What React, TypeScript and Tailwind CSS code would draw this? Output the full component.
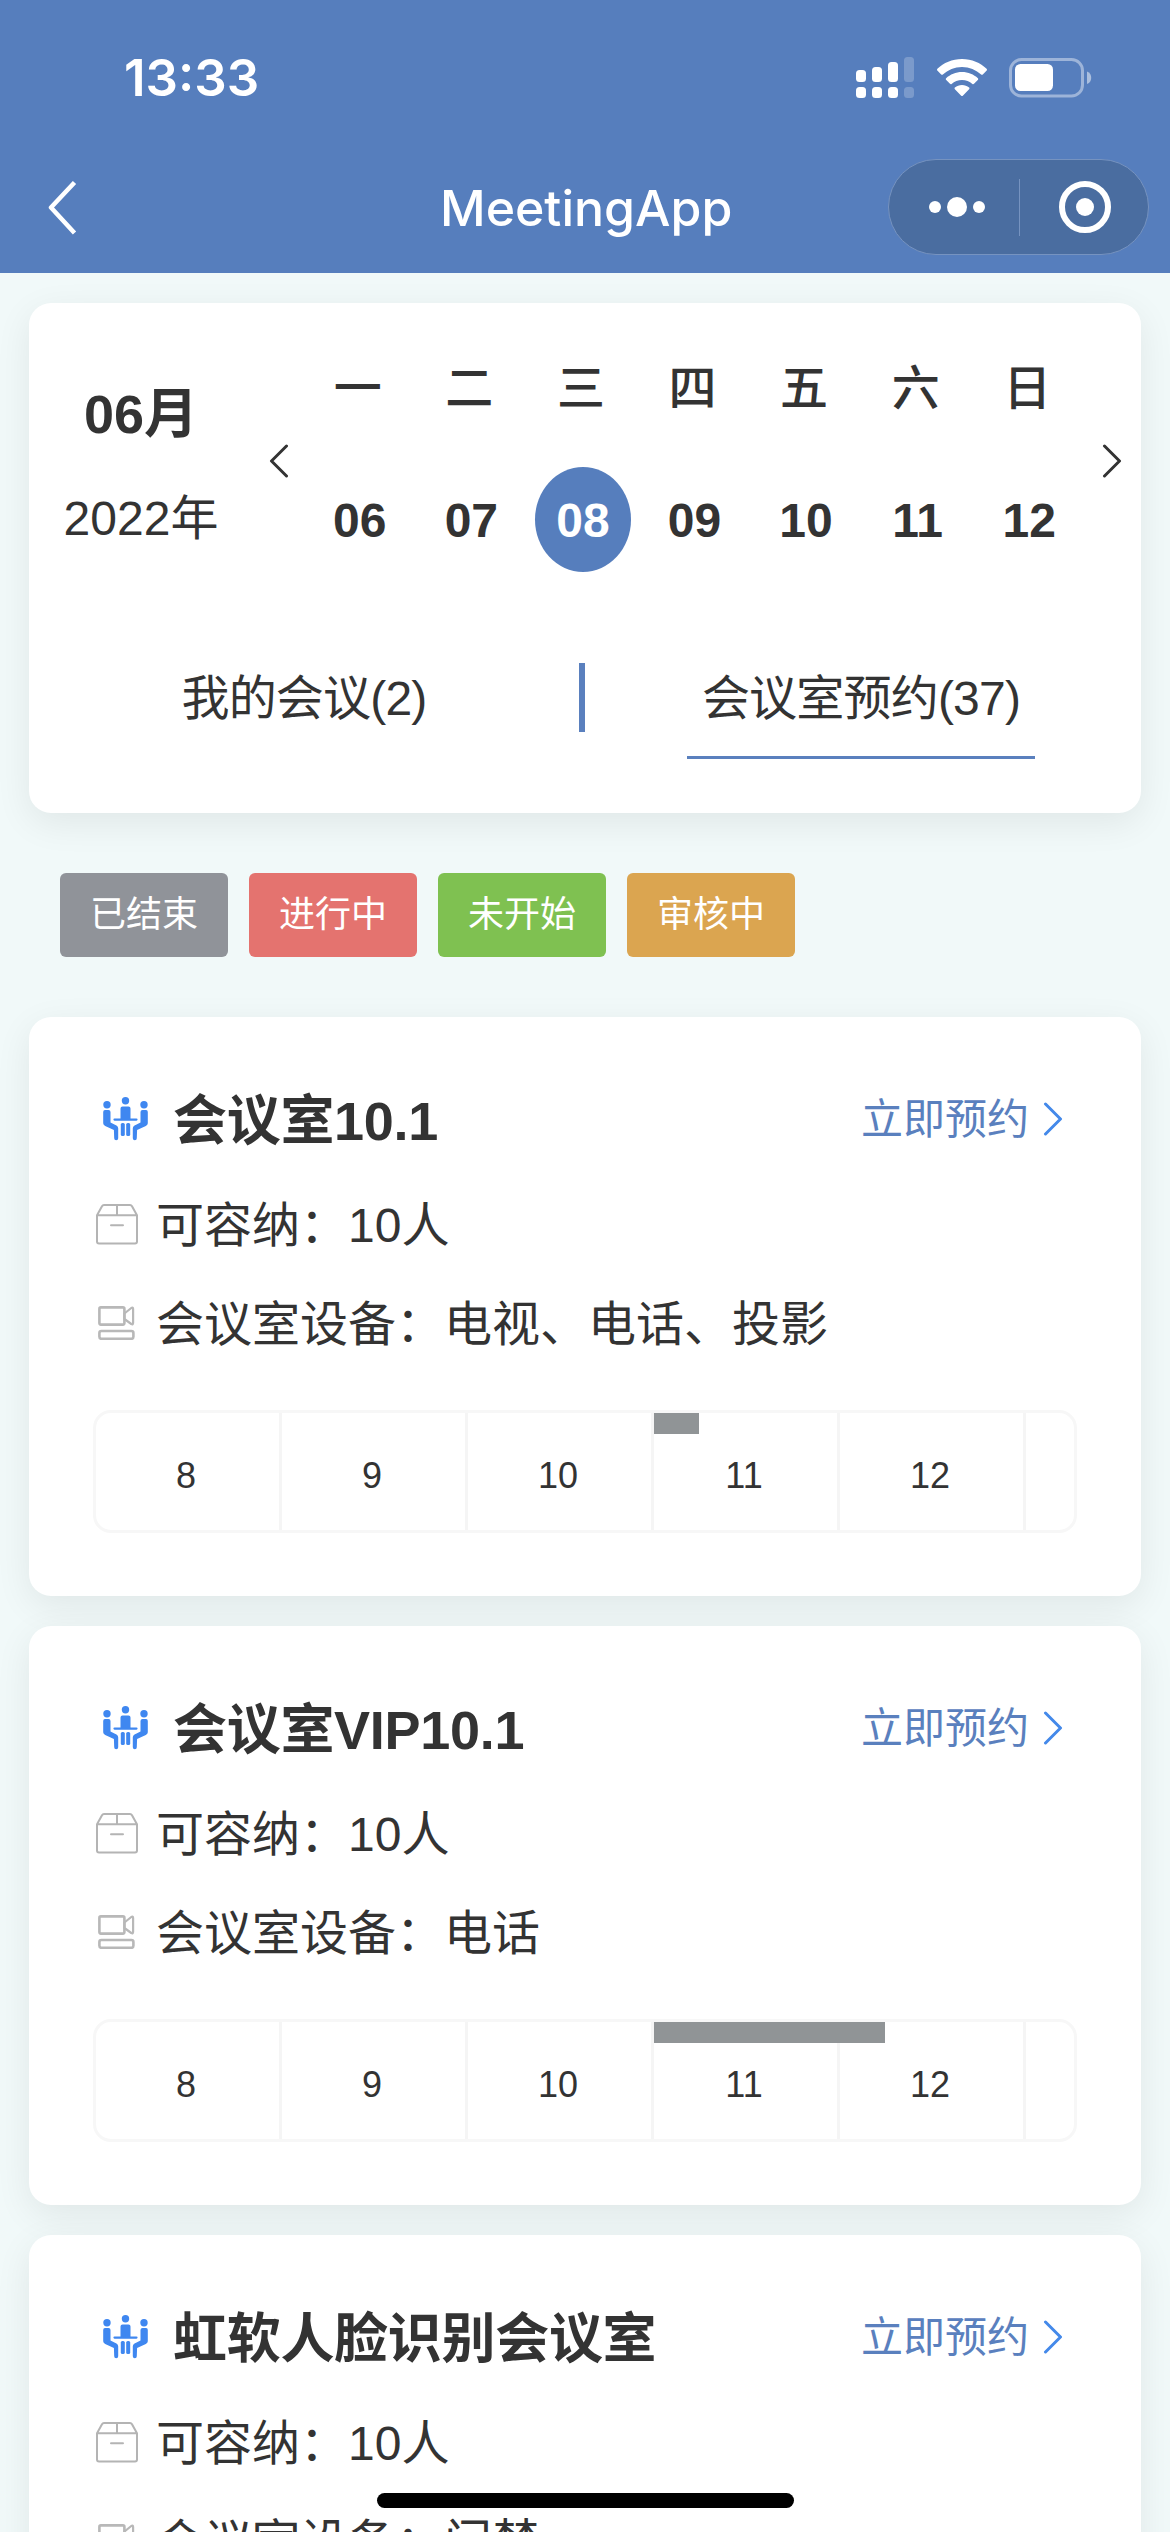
import React from "react";

const WEEK = [
  ["一", "06"],
  ["二", "07"],
  ["三", "08"],
  ["四", "09"],
  ["五", "10"],
  ["六", "11"],
  ["日", "12"],
];

const TAGS = [
  { label: "已结束", color: "bg-[#909399]" },
  { label: "进行中", color: "bg-[#e4736f]" },
  { label: "未开始", color: "bg-[#7fc151]" },
  { label: "审核中", color: "bg-[#dba550]" },
];

const ROOMS = [
  { name: "会议室10.1", devices: "电视、电话、投影", busy: 45 },
  { name: "会议室VIP10.1", devices: "电话", busy: 231 },
  { name: "虹软人脸识别会议室", devices: "门禁", busy: 0 },
];

const HOURS = ["8", "9", "10", "11", "12"];

function Signal() {
  return (
    <svg className="h-[42px] w-[58px]" viewBox="0 0 58 42" fill="#fff">
      <rect x="0" y="13" width="10" height="12" rx="3.5" />
      <rect x="16" y="10" width="10" height="15" rx="3.5" />
      <rect x="32" y="5" width="10" height="20" rx="3.5" />
      <rect x="0" y="30" width="10" height="11" rx="3.5" />
      <rect x="16" y="30" width="10" height="11" rx="3.5" />
      <rect x="32" y="30" width="10" height="11" rx="3.5" />
      <g opacity="0.22">
        <rect x="48" y="0" width="10" height="25" rx="3.5" />
        <rect x="48" y="30" width="10" height="11" rx="3.5" />
      </g>
    </svg>
  );
}

function Wifi() {
  return (
    <svg className="h-[38px] w-[50px]" viewBox="0 0 50 38" fill="#fff">
      <path d="M25 0C34.800 0 43.500 3.900 49.600 9.800c.5.500.5 1.100.1 1.600l-3.900 4c-.5.500-1.200.500-1.700.1C39.100 10.800 32.400 7.900 25 7.900S10.900 10.800 5.900 15.500c-.5.400-1.200.4-1.700-.1l-3.900-4c-.4-.5-.4-1.100.1-1.600C6.500 3.900 15.200 0 25 0Z" />
      <path d="M25 13c6.200 0 11.800 2.400 15.900 6.200.5.500.5 1.100.1 1.600l-4 4c-.5.500-1.100.500-1.600.1C32.600 22.500 29 21 25 21s-7.600 1.500-10.400 3.900c-.5.400-1.100.4-1.600-.1l-4-4c-.4-.5-.4-1.100.1-1.600C13.200 15.400 18.800 13 25 13Z" />
      <path d="M25 26c2.700 0 5.200 1 7.100 2.600.5.400.5 1.100 0 1.600l-6.300 6.500c-.5.500-1.100.5-1.600 0l-6.300-6.500c-.5-.5-.5-1.200 0-1.600C19.800 27 22.300 26 25 26Z" />
    </svg>
  );
}

function Battery() {
  return (
    <svg className="h-[40px] w-[83px]" viewBox="0 0 83 40" fill="none">
      <rect x="1.500" y="1.500" width="72" height="36.500" rx="11" stroke="#fff" strokeOpacity="0.42" strokeWidth="3" />
      <rect x="6" y="6" width="38" height="27" rx="5.500" fill="#fff" />
      <path d="M78 13.500c3 1 4.200 3.600 4.200 6.200S81 25 78 26Z" fill="#fff" fillOpacity="0.5" />
    </svg>
  );
}

function Chevron({ left = false, className }: { left?: boolean; className: string }) {
  return (
    <svg className={className} viewBox="0 0 20 34" fill="none" stroke="currentColor" strokeWidth="3" strokeLinecap="round" strokeLinejoin="round">
      <path d={left ? "M17.500 2 2.500 17l15 15" : "M2.500 2 17.500 17l-15 15"} />
    </svg>
  );
}

function MeetingIcon() {
  return (
    <svg className="h-[44px] w-[45px] shrink-0" viewBox="0 0 45 44" fill="#3f87f0">
      <circle cx="22.500" cy="3.700" r="3.700" />
      <circle cx="4" cy="7.700" r="3.700" />
      <circle cx="41" cy="7.700" r="3.700" />
      <path d="M19.500 9.500h6a2 2 0 0 1 2 2v10h6a1 1 0 0 1 0 2.200h-22a1 1 0 0 1 0-2.200h6v-10a2 2 0 0 1 2-2Z" />
      <rect x="17.800" y="26" width="4" height="13" rx="1.600" />
      <rect x="23.200" y="26" width="4" height="13" rx="1.600" />
      <path d="M2 13h3.500a2 2 0 0 1 2 2v10.500l6 3q1.700.9 1.700 2.800v10q0 2-2 2t-2-2l-.3-8.300-8.700-4Q.2 28 .2 26.200V15q0-2 1.800-2Z" />
      <path d="M43 13h-3.500a2 2 0 0 0-2 2v10.500l-6 3q-1.700.9-1.700 2.800v10q0 2 2 2t2-2l.3-8.300 8.700-4q2-1 2-2.800V15q0-2-1.800-2Z" />
    </svg>
  );
}

function BoxIcon() {
  return (
    <svg className="h-[41px] w-[42px] shrink-0" viewBox="0 0 42 41" fill="none" stroke="#b4b4b4" strokeWidth="2" strokeLinejoin="round" strokeLinecap="round">
      <path d="M1 11.300 6 2.300Q6.700 1 8 1h26q1.300 0 2 1.300l5 9v26.200q0 2-2 2H3q-2 0-2-2ZM1 11.300h40M21 1v10.300M15 21.300h12" />
    </svg>
  );
}

function DeviceIcon() {
  return (
    <svg className="h-[34px] w-[37px] shrink-0" viewBox="0 0 37 34" fill="none" stroke="#b8b8b8" strokeWidth="2.600" strokeLinejoin="round">
      <rect x="1.400" y="1.400" width="25" height="17.200" rx="1.500" />
      <path d="M26.400 7.500 33.300 2q1.800-.9 1.800 1v14q0 1.900-1.800 1L26.400 13Z" strokeWidth="2.200" />
      <rect x="1.400" y="25" width="34" height="7.800" rx="2" />
    </svg>
  );
}

function RoomCard({ room }: { room: (typeof ROOMS)[number] }) {
  return (
    <section className="flex h-[579px] shrink-0 flex-col rounded-[22px] bg-white pr-[64px] pl-[64px] shadow-[0_10px_36px_rgba(0,0,0,0.075)]">
      <div className="mt-[70px] flex h-[64px] items-center">
        <div className="flex w-[80px] pl-[10px]">
          <MeetingIcon />
        </div>
        <h2 className="flex-1 pt-[4px] text-[54px] leading-[64px] font-bold tracking-[-0.3px]">{room.name}</h2>
        <span className="mr-[14px] pt-[2px] text-[42px] leading-[60px] text-[#5a80be]">立即预约</span>
        <Chevron className="mr-[14px] h-[34px] w-[20px] text-[#4489ea]" />
      </div>
      <div className="mt-[40px] flex h-[66px] items-center text-[48px]">
        <div className="flex w-[63px] pl-[3px]">
          <BoxIcon />
        </div>
        <span className="pt-[3px]">可容纳：10人</span>
      </div>
      <div className="mt-[33px] flex h-[66px] items-center text-[48px]">
        <div className="flex w-[63px] pl-[5px]">
          <DeviceIcon />
        </div>
        <span className="pt-[4px]">会议室设备：{room.devices}</span>
      </div>
      <div className="mt-[54px] flex h-[123px] w-[984px] overflow-hidden rounded-[18px] border-[3px] border-[#f7f7f7] text-[36px]">
        {HOURS.map((hour) => (
          <div key={hour} className="relative flex w-[186px] shrink-0 items-center justify-center border-r-[3px] border-[#f5f5f5] pt-[9px] pr-[3px]">
            {hour}
            {hour === "11" && room.busy > 0 && (
              <div className="absolute top-0 left-0 z-10 h-[21px] bg-[#909496]" style={{ width: room.busy }} />
            )}
          </div>
        ))}
      </div>
    </section>
  );
}

export default function App() {
  return (
    <div className="relative flex h-[2532px] w-[1170px] flex-col overflow-hidden bg-[#f1f9f9] font-['Liberation_Sans','Noto_Sans_CJK_SC',sans-serif] text-[#333]">
      <header className="z-10 h-[273px] shrink-0 bg-[#567ebd] font-['Inter','Noto_Sans_CJK_SC',sans-serif] text-white">
        <div className="flex h-[141px] items-start justify-between pr-[78px] pl-[124px]">
          <div className="mt-[46px] text-[51px] leading-[64px] font-semibold">13:33</div>
          <div className="mt-[57px] flex items-start">
            <Signal />
            <div className="mt-[2px] ml-[23px]">
              <Wifi />
            </div>
            <div className="mt-[1px] ml-[22px]">
              <Battery />
            </div>
          </div>
        </div>
        <div className="flex h-[132px] items-start">
          <div className="mt-[40px] flex w-[440px] pl-[48px]">
            <svg className="h-[56px] w-[30px]" viewBox="0 0 30 56" fill="none" stroke="#fff" strokeWidth="4.500" strokeLinejoin="round">
              <path d="M26.500 1.500 3 26.500l23.500 25.500" />
            </svg>
          </div>
          <h1 className="mt-[35px] w-[448px] text-[50px] leading-[64px] font-medium">MeetingApp</h1>
          <div className="mt-[18px] flex h-[96px] w-[261px] items-center rounded-full border border-[#7693c0] bg-[#4a6da0]">
            <div className="flex w-[130px] items-center gap-[6px] pl-[40px]">
              <i className="h-[12px] w-[12px] rounded-full bg-white" />
              <i className="h-[20px] w-[20px] rounded-full bg-white" />
              <i className="h-[12px] w-[12px] rounded-full bg-white" />
            </div>
            <div className="h-[57px] w-px bg-[#7693c0]" />
            <div className="ml-[39px] flex h-[52px] w-[52px] items-center justify-center rounded-full border-[6px] border-white">
              <i className="h-[18px] w-[18px] rounded-full bg-white" />
            </div>
          </div>
        </div>
      </header>

      <main className="flex flex-col px-[29px] pt-[30px]">
        <section className="flex h-[510px] shrink-0 flex-col rounded-[22px] bg-white shadow-[0_10px_36px_rgba(0,0,0,0.075)]">
          <div className="flex h-[300px]">
            <div className="flex w-[224px] flex-col items-center">
              <div className="mt-[75px] text-[54px] leading-[72px] font-bold">06月</div>
              <div className="mt-[36px] text-[48px] leading-[66px]">2022年</div>
            </div>
            <Chevron left className="mt-[141px] ml-[16px] h-[34px] w-[20px]" />
            <div className="ml-[15px] grid w-[781px] grid-cols-7 text-[48px] font-bold">
              {WEEK.map(([day, date]) => (
                <div key={day} className="flex flex-col items-center">
                  <span className="mt-[53px] mr-[4px] leading-[66px] font-medium">{day}</span>
                  <span
                    className={
                      date === "08"
                        ? "mt-[45px] flex h-[105px] w-[96px] items-center justify-center rounded-[50%] bg-[#567ebd] pt-[2px] text-white"
                        : "mt-[45px] flex h-[105px] w-[96px] items-center justify-center pt-[2px]"
                    }
                  >
                    {date}
                  </span>
                </div>
              ))}
            </div>
            <Chevron className="mt-[141px] ml-[17px] h-[34px] w-[20px]" />
          </div>
          <div className="flex text-[48px] tracking-[-0.8px]">
            <div className="mt-[63px] w-[550px] text-center leading-[66px]">我的会议(2)</div>
            <div className="mt-[60px] h-[69px] w-[6px] bg-[#5a80be]" />
            <div className="mt-[60px] ml-[102px] h-[96px] w-[348px] border-b-[3px] border-[#5a80be] pt-[3px] text-center leading-[66px]">会议室预约(37)</div>
          </div>
        </section>

        <div className="flex gap-[21px] pt-[60px] pb-[60px] pl-[31px]">
          {TAGS.map((tag) => (
            <div key={tag.label} className={`flex h-[84px] w-[168px] items-center justify-center rounded-[6px] text-[36px] text-white ${tag.color}`}>
              {tag.label}
            </div>
          ))}
        </div>

        <div className="flex flex-col gap-[30px]">
          {ROOMS.map((room) => (
            <RoomCard key={room.name} room={room} />
          ))}
        </div>
      </main>

      <div className="absolute top-[2493px] left-[377px] z-20 h-[15px] w-[417px] rounded-full bg-black" />
    </div>
  );
}
